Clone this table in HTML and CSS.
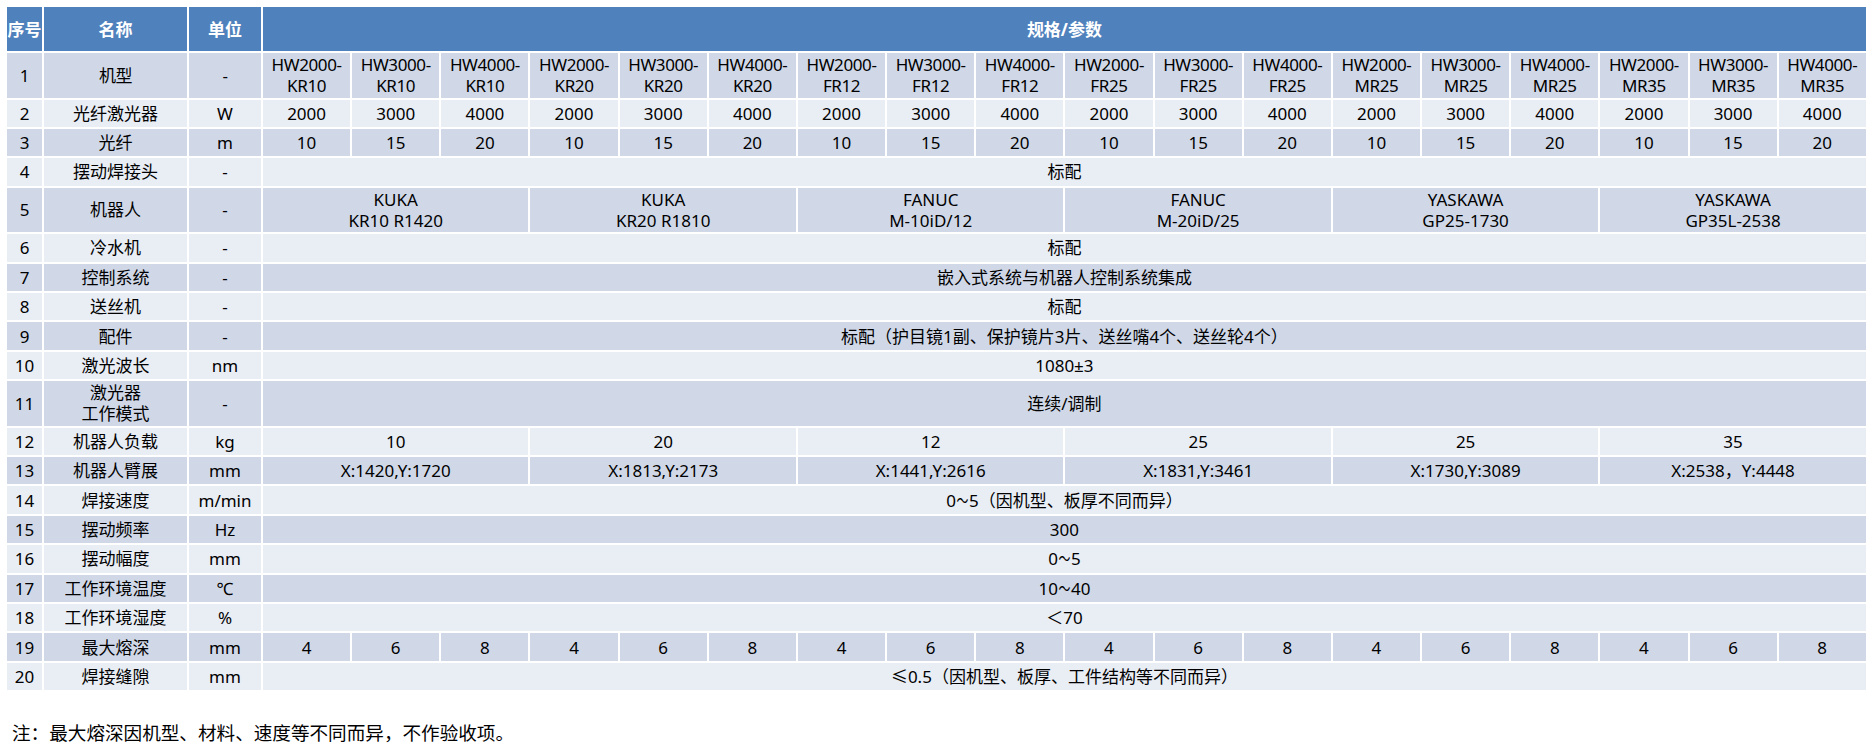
FILE: index.html
```html
<!DOCTYPE html>
<html lang="zh-CN">
<head>
<meta charset="utf-8">
<title>规格参数</title>
<link rel="stylesheet" href="styles.css">
</head>
<body>
<table class="spec">
  <colgroup>
    <col class="c-no"><col class="c-name"><col class="c-unit">
    <col class="c-d"><col class="c-d"><col class="c-d"><col class="c-d"><col class="c-d"><col class="c-d">
    <col class="c-d"><col class="c-d"><col class="c-d"><col class="c-d"><col class="c-d"><col class="c-d">
    <col class="c-d"><col class="c-d"><col class="c-d"><col class="c-d"><col class="c-d"><col class="c-d">
  </colgroup>
  <thead>
    <tr class="head"><th>序号</th><th>名称</th><th>单位</th><th colspan="18">规格/参数</th></tr>
  </thead>
  <tbody>
    <tr class="dark tall model"><td>1</td><td>机型</td><td>-</td>
      <td>HW2000-<br>KR10</td><td>HW3000-<br>KR10</td><td>HW4000-<br>KR10</td>
      <td>HW2000-<br>KR20</td><td>HW3000-<br>KR20</td><td>HW4000-<br>KR20</td>
      <td>HW2000-<br>FR12</td><td>HW3000-<br>FR12</td><td>HW4000-<br>FR12</td>
      <td>HW2000-<br>FR25</td><td>HW3000-<br>FR25</td><td>HW4000-<br>FR25</td>
      <td>HW2000-<br>MR25</td><td>HW3000-<br>MR25</td><td>HW4000-<br>MR25</td>
      <td>HW2000-<br>MR35</td><td>HW3000-<br>MR35</td><td>HW4000-<br>MR35</td></tr>
    <tr class="light"><td>2</td><td>光纤激光器</td><td>W</td>
      <td>2000</td><td>3000</td><td>4000</td><td>2000</td><td>3000</td><td>4000</td>
      <td>2000</td><td>3000</td><td>4000</td><td>2000</td><td>3000</td><td>4000</td>
      <td>2000</td><td>3000</td><td>4000</td><td>2000</td><td>3000</td><td>4000</td></tr>
    <tr class="dark"><td>3</td><td>光纤</td><td>m</td>
      <td>10</td><td>15</td><td>20</td><td>10</td><td>15</td><td>20</td>
      <td>10</td><td>15</td><td>20</td><td>10</td><td>15</td><td>20</td>
      <td>10</td><td>15</td><td>20</td><td>10</td><td>15</td><td>20</td></tr>
    <tr class="light"><td>4</td><td>摆动焊接头</td><td>-</td><td colspan="18">标配</td></tr>
    <tr class="dark tall"><td>5</td><td>机器人</td><td>-</td>
      <td colspan="3">KUKA<br>KR10 R1420</td><td colspan="3">KUKA<br>KR20 R1810</td>
      <td colspan="3">FANUC<br>M-10iD/12</td><td colspan="3">FANUC<br>M-20iD/25</td>
      <td colspan="3">YASKAWA<br>GP25-1730</td><td colspan="3">YASKAWA<br>GP35L-2538</td></tr>
    <tr class="light"><td>6</td><td>冷水机</td><td>-</td><td colspan="18">标配</td></tr>
    <tr class="dark"><td>7</td><td>控制系统</td><td>-</td><td colspan="18">嵌入式系统与机器人控制系统集成</td></tr>
    <tr class="light"><td>8</td><td>送丝机</td><td>-</td><td colspan="18">标配</td></tr>
    <tr class="dark"><td>9</td><td>配件</td><td>-</td><td colspan="18">标配（护目镜1副、保护镜片3片、送丝嘴4个、送丝轮4个）</td></tr>
    <tr class="light"><td>10</td><td>激光波长</td><td>nm</td><td colspan="18">1080±3</td></tr>
    <tr class="dark tall"><td>11</td><td>激光器<br>工作模式</td><td>-</td><td colspan="18">连续/调制</td></tr>
    <tr class="light"><td>12</td><td>机器人负载</td><td>kg</td>
      <td colspan="3">10</td><td colspan="3">20</td><td colspan="3">12</td>
      <td colspan="3">25</td><td colspan="3">25</td><td colspan="3">35</td></tr>
    <tr class="dark"><td>13</td><td>机器人臂展</td><td>mm</td>
      <td colspan="3">X:1420,Y:1720</td><td colspan="3">X:1813,Y:2173</td><td colspan="3">X:1441,Y:2616</td>
      <td colspan="3">X:1831,Y:3461</td><td colspan="3">X:1730,Y:3089</td><td colspan="3">X:2538，Y:4448</td></tr>
    <tr class="light"><td>14</td><td>焊接速度</td><td>m/min</td><td colspan="18">0<span class="tilde">～</span>5（因机型、板厚不同而异）</td></tr>
    <tr class="dark"><td>15</td><td>摆动频率</td><td>Hz</td><td colspan="18">300</td></tr>
    <tr class="light"><td>16</td><td>摆动幅度</td><td>mm</td><td colspan="18">0<span class="tilde">～</span>5</td></tr>
    <tr class="dark"><td>17</td><td>工作环境温度</td><td>℃</td><td colspan="18">10<span class="tilde">～</span>40</td></tr>
    <tr class="light"><td>18</td><td>工作环境湿度</td><td>%</td><td colspan="18">＜70</td></tr>
    <tr class="dark"><td>19</td><td>最大熔深</td><td>mm</td>
      <td>4</td><td>6</td><td>8</td><td>4</td><td>6</td><td>8</td>
      <td>4</td><td>6</td><td>8</td><td>4</td><td>6</td><td>8</td>
      <td>4</td><td>6</td><td>8</td><td>4</td><td>6</td><td>8</td></tr>
    <tr class="light"><td>20</td><td>焊接缝隙</td><td>mm</td><td colspan="18">≤0.5（因机型、板厚、工件结构等不同而异）</td></tr>
  </tbody>
</table>
<p class="note">注：最大熔深因机型、材料、速度等不同而异，不作验收项。</p>
</body>
</html>
```
FILE: styles.css
```css
html, body {
  margin: 0;
  padding: 0;
  background: #ffffff;
}
body {
  padding: 5px 6px 0 5px;
  font-family: "Noto Sans", "Noto Sans CJK SC", sans-serif;
  color: #000;
}
.spec {
  border-collapse: collapse;
  table-layout: fixed;
  width: 1862px;
  font-size: 17px;
}
.c-no { width: 37px; }
.c-name { width: 145px; }
.c-unit { width: 74px; }
.c-d { width: 89.17px; }
.spec th, .spec td {
  border: 2px solid #ffffff;
  padding: 0;
  text-align: center;
  vertical-align: middle;
  line-height: 21px;
  white-space: nowrap;
  overflow: hidden;
}
.head th {
  background: #4f81bd;
  color: #ffffff;
  font-weight: bold;
  height: 44px;
}
.spec tr td { height: 27.4px; }
.spec tr.tall td { height: 44.5px; }
.model td { letter-spacing: -0.4px; }
.dark td { background: #d0d8e8; }
.light td { background: #e9edf4; }
.tilde {
  display: inline-block;
  transform: scaleX(0.7);
  margin: 0 -2px;
}
.note {
  margin: 29px 0 0 7px;
  font-size: 18.6px;
  line-height: 24px;
}
```
